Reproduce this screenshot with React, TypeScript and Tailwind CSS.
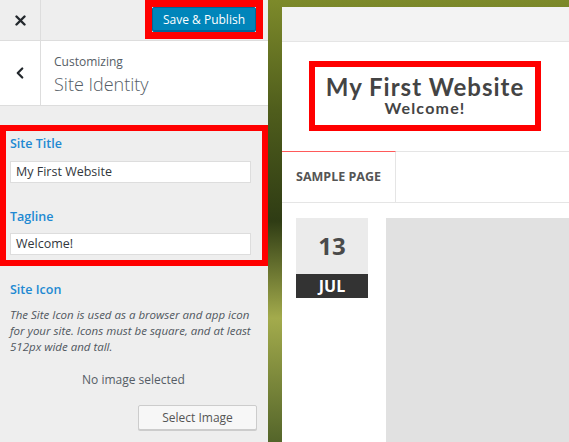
import { ChevronLeft } from "lucide-react";

function Sidebar() {
  return (
    <div className="flex w-[268px] shrink-0 flex-col bg-[#eeeeee] font-['Open_Sans',sans-serif] text-[#555d66]">
      {/* Top actions */}
      <div className="flex h-[41px] border-b border-[#dddddd]">
        <div className="flex w-[41px] items-center justify-center border-r border-[#dddddd]">
          <svg width="11" height="11" viewBox="0 0 11 11">
            <path d="M1.5 1.5 L9.5 9.5 M9.5 1.5 L1.5 9.5" stroke="#23282d" strokeWidth="2.4" strokeLinecap="round" />
          </svg>
        </div>
        <div className="ml-auto mr-[5px] flex h-[39px] w-[118px] items-center justify-center border-[7px] border-[#ff0000]">
          <button className="h-[25px] w-[104px] rounded-[2px] border border-[#006799] bg-[#0085ba] text-[12px] text-white shadow-[inset_0_-1px_0_#006799]">
            Save &amp; Publish
          </button>
        </div>
      </div>

      {/* Section header */}
      <div className="flex h-[65px] border-b border-[#dddddd] bg-white">
        <div className="flex w-[41px] items-center justify-center border-r border-[#dddddd]">
          <ChevronLeft size={18} strokeWidth={3} color="#23282d" />
        </div>
        <div className="flex flex-col pl-[13px] pt-[13px]">
          <span className="text-[12px] leading-[16px] text-[#555d66]">Customizing</span>
          <span className="mt-[2px] text-[18px] font-light leading-[24px] text-[#555d66]">Site Identity</span>
        </div>
      </div>

      {/* Title & tagline */}
      <div className="mt-[19px] h-[141px] border-[6px] border-[#ff0000] pl-[4px] pr-[11px] pt-[3px]">
        <div className="text-[12.5px] font-semibold leading-[20px] text-[#2189d2]">Site Title</div>
        <div className="mt-[7px] flex h-[22px] items-center border border-[#dddddd] bg-white px-[5px] text-[12.5px] text-[#32373c]">
          My First Website
        </div>
        <div className="mt-[24px] text-[12.5px] font-semibold leading-[20px] text-[#2189d2]">Tagline</div>
        <div className="mt-[6px] flex h-[22px] items-center border border-[#dddddd] bg-white px-[5px] text-[12.5px] text-[#32373c]">
          Welcome!
        </div>
      </div>

      {/* Site icon */}
      <div className="px-[10px] pr-[11px]">
        <div className="mt-[14px] text-[12.5px] font-semibold leading-[20px] text-[#2189d2]">Site Icon</div>
        <p className="mt-[7px] text-[11.5px] italic leading-[16px] text-[#50575e]">
          The Site Icon is used as a browser and app icon for your site. Icons must be square, and at least 512px wide and tall.
        </p>
        <div className="mt-[16px] text-center text-[12px] leading-[18px] text-[#555d66]">No image selected</div>
        <div className="mt-[16px] flex justify-end">
          <button className="h-[25px] w-[119px] rounded-[2px] border border-[#cccccc] bg-[#f7f7f7] text-[12px] text-[#555555] shadow-[0_1px_0_#cccccc]">
            Select Image
          </button>
        </div>
      </div>
    </div>
  );
}

function Preview() {
  return (
    <div className="flex-1 bg-[linear-gradient(to_bottom,#7d8a2a_0%,#4f5d1c_25%,#2f3c14_50%,#a3ab4c_72%,#54652a_100%)] pl-[14px] pt-[7px]">
      <div className="h-full bg-white font-['Open_Sans',sans-serif]">
        <div className="h-[35px] border-b border-[#e5e5e5] bg-[#f3f3f3]" />
        <div className="h-[109px] pl-[27px] pt-[19px]">
          <div className="flex h-[70px] w-[232px] flex-col items-center justify-center border-[6px] border-[#ff0000] font-['Lato',sans-serif] text-[#444444]">
            <div className="text-[24px] font-bold leading-[24px] tracking-[1px]">My First Website</div>
            <div className="text-[16px] font-bold leading-[18px] tracking-[1.2px]">Welcome!</div>
          </div>
        </div>
        <div className="flex h-[52px] border-y border-[#e5e5e5]">
          <div className="-mt-px flex w-[114px] items-center border-r border-t border-r-[#e5e5e5] border-t-[#ff5a5a] pl-[14px] text-[12.5px] font-bold text-[#555555]">
            SAMPLE PAGE
          </div>
        </div>
        <div className="flex gap-[18px] pl-[14px] pt-[15px]">
          <div className="w-[72px] shrink-0">
            <div className="flex h-[56px] items-center justify-center bg-[#ebebeb] text-[24px] font-bold text-[#4a4a4a]">13</div>
            <div className="flex h-[24px] items-center justify-center bg-[#333333] text-[16px] font-bold text-white">JUL</div>
          </div>
          <div className="h-[240px] flex-1 bg-[#e1e1e1]" />
        </div>
      </div>
    </div>
  );
}

export default function App() {
  return (
    <div className="flex h-[442px] w-[569px] overflow-hidden">
      <Sidebar />
      <Preview />
    </div>
  );
}
